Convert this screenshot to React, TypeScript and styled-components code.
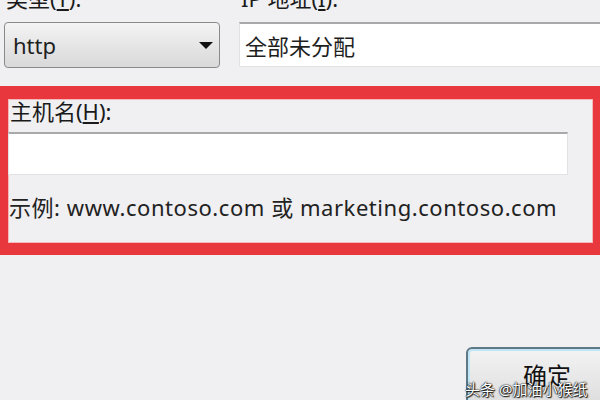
import React from "react";
import styled, { createGlobalStyle } from "styled-components";

const Global = createGlobalStyle`
  html, body { margin: 0; padding: 0; background: #f0eff1; }
  body { font-family: "Noto Sans", "Noto Sans CJK SC", sans-serif; color: #1e1e1e; }
`;

const Page = styled.div`
  position: relative;
  width: 600px;
  height: 400px;
  overflow: hidden;
  background: #f0eff1;
`;

const TopRow = styled.div`
  display: grid;
  grid-template-columns: 216px 1fr;
  column-gap: 19px;
  margin-top: -14px;
  padding-left: 4px;
  margin-right: -20px;
`;

const Field = styled.div`
  display: flex;
  flex-direction: column;
  gap: 12px;
`;

const Label = styled.div<{ $indent?: number }>`
  font-size: 22px;
  line-height: 24px;
  padding-left: ${(p) => p.$indent ?? 0}px;
  white-space: nowrap;
  color: #1a1a1a;
`;

const Key = styled.span`
  text-decoration: underline;
  text-underline-offset: 2px;
`;

const Select = styled.div`
  height: 46px;
  box-sizing: border-box;
  border: 1px solid #8a8a8a;
  border-radius: 4px;
  background: linear-gradient(#f4f4f4, #e6e6e6 50%, #d9d9d9);
  display: flex;
  align-items: center;
  justify-content: space-between;
  padding: 0 6px 0 8px;
  font-size: 22px;
  color: #1e1e1e;
`;

const Arrow = styled.span`
  width: 0;
  height: 0;
  border-left: 7px solid transparent;
  border-right: 7px solid transparent;
  border-top: 7px solid #111;
`;

const TextBox = styled.div<{ $width?: string }>`
  height: ${(p) => (p.$width ? "43px" : "45px")};
  width: ${(p) => p.$width ?? "auto"};
  box-sizing: border-box;
  background: #fff;
  border: 1px solid #e2e2e4;
  border-top: 2px solid #a9a9ab;
  display: flex;
  align-items: center;
  padding-left: 5px;
  font-size: 22px;
  color: #1e1e1e;
`;

const HostBox = styled.div`
  margin-top: 18px;
  height: 169px;
  box-sizing: border-box;
  border-style: solid;
  border-color: #e8383d;
  border-width: 13px 7px 12px 8px;
  display: flex;
  flex-direction: column;
  box-shadow: inset 0 0 0 1px #f5b8b8;
`;

const Hint = styled.div`
  margin-top: 20px;
  font-size: 22px;
  line-height: 24px;
  letter-spacing: 0.55px;
  padding-left: 1px;
  white-space: nowrap;
  color: #222;
`;

const Footer = styled.div`
  display: flex;
  justify-content: flex-end;
  padding-top: 92px;
  margin-right: -40px;
`;

const Button = styled.div`
  width: 174px;
  height: 70px;
  box-sizing: border-box;
  border: 2px solid #5f7886;
  border-radius: 6px;
  box-shadow: inset 0 0 0 2px #bfe6f7;
  background: linear-gradient(#f3f3f3, #e6e6e6 50%, #d8d8d8);
  display: flex;
  justify-content: flex-start;
  padding: 8px 0 0 55px;
  font-size: 24px;
  color: #111;
`;

const Watermark = styled.div`
  position: absolute;
  left: 465px;
  top: 379px;
  font-size: 15px;
  line-height: 20px;
  color: #fff;
  white-space: nowrap;
  text-shadow: 0 0 2px #000, 0 0 1px #000, 1px 1px 1px #222;
`;

export default function App() {
  return (
    <Page>
      <Global />
      <TopRow>
        <Field>
          <Label $indent={2}>
            类型(<Key>T</Key>):
          </Label>
          <Select>
            <span>http</span>
            <Arrow />
          </Select>
        </Field>
        <Field>
          <Label $indent={2}>
            IP 地址(<Key>I</Key>):
          </Label>
          <TextBox>全部未分配</TextBox>
        </Field>
      </TopRow>
      <HostBox>
        <Label $indent={2}>
          主机名(<Key>H</Key>):
        </Label>
        <TextBox $width="560px" style={{ marginTop: 9 }} />
        <Hint>示例: www.contoso.com 或 marketing.contoso.com</Hint>
      </HostBox>
      <Footer>
        <Button>确定</Button>
      </Footer>
      <Watermark>头条 @加油小猴纸</Watermark>
    </Page>
  );
}
